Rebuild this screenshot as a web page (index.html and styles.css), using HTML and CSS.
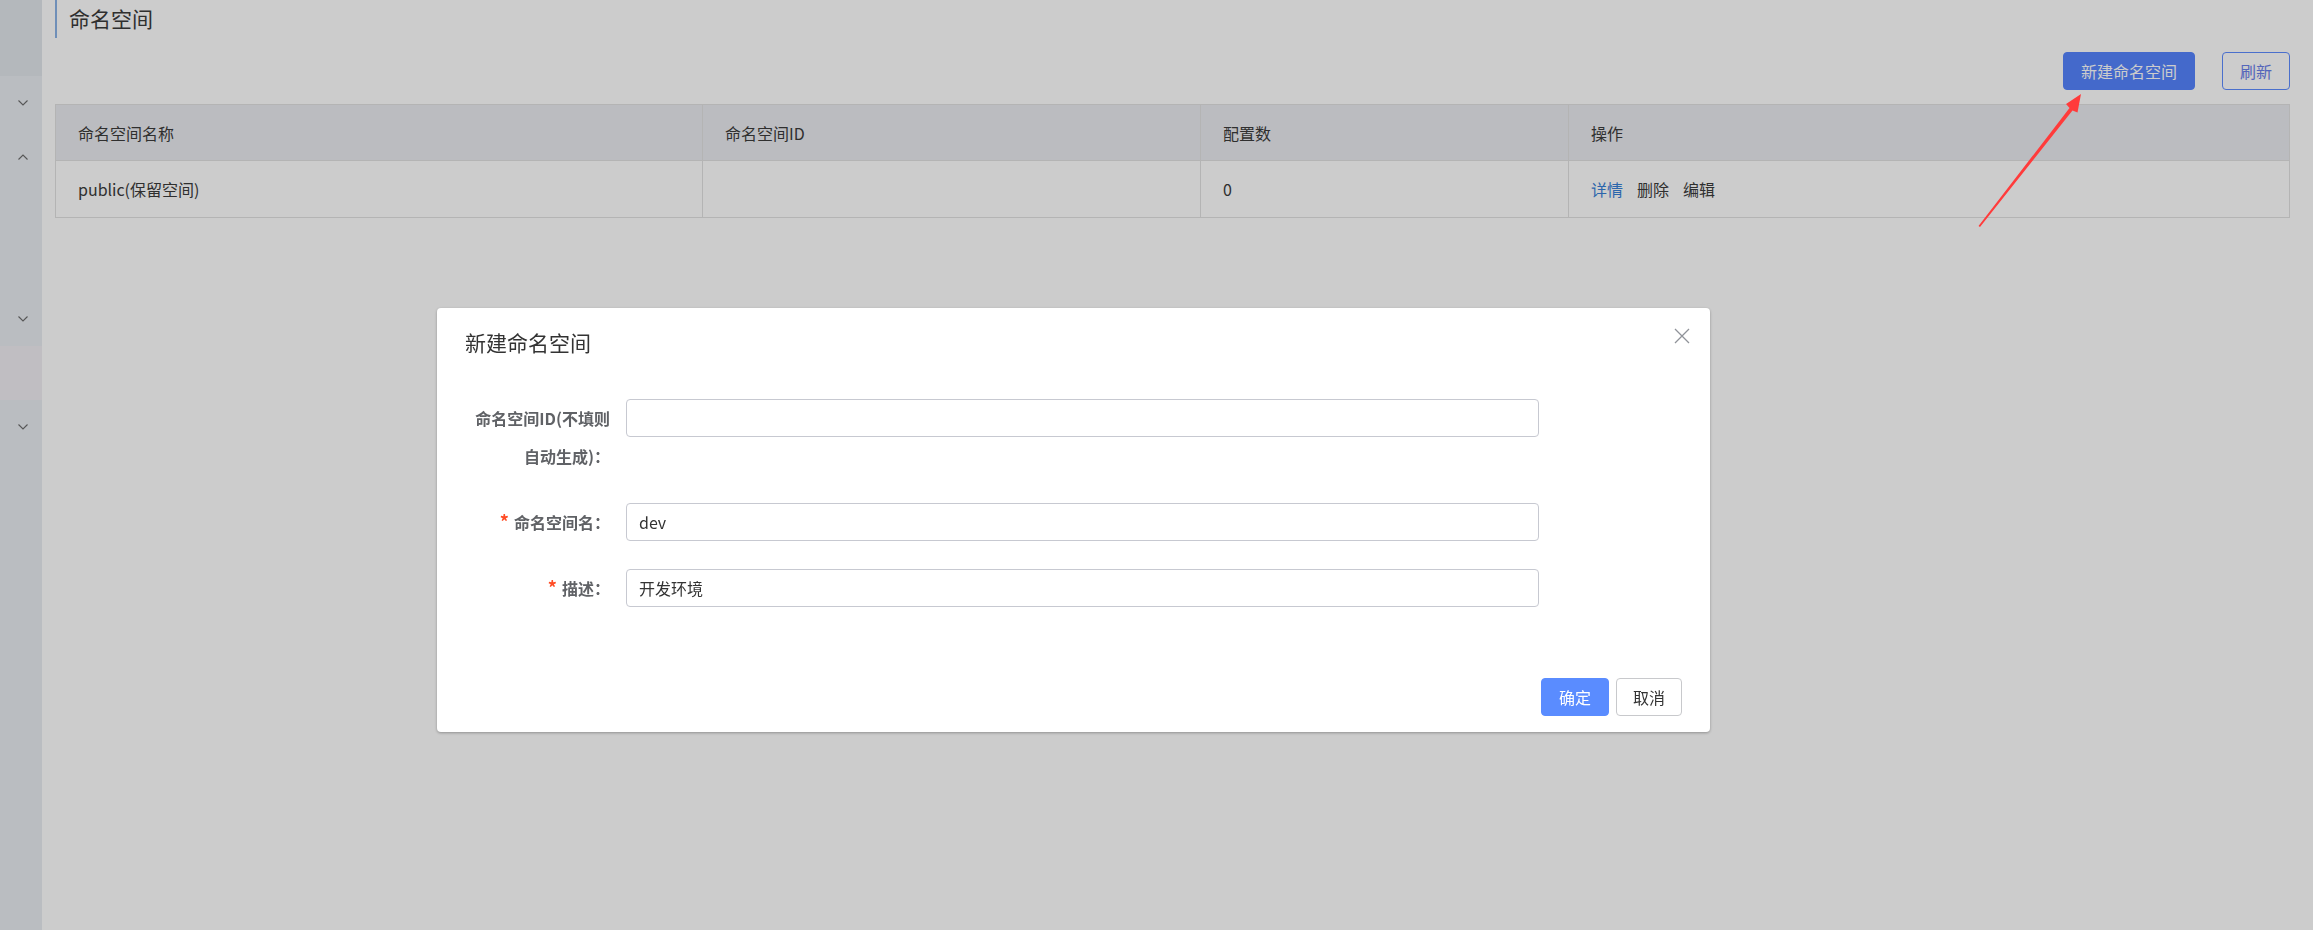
FILE: index.html
```html
<!DOCTYPE html>
<html lang="zh-CN">
<head>
<meta charset="utf-8">
<title>命名空间</title>
<link rel="stylesheet" href="styles.css">
</head>
<body>
<div class="app">
  <aside class="sidebar">
    <div class="side-top"></div>
    <div class="side-item"><svg class="chev" viewBox="0 0 10 6"><polyline points="0.5,0.5 5,5 9.5,0.5"/></svg></div>
    <div class="side-item"><svg class="chev" viewBox="0 0 10 6"><polyline points="0.5,5.5 5,1 9.5,5.5"/></svg></div>
    <div class="side-item"></div>
    <div class="side-item"></div>
    <div class="side-item"><svg class="chev" viewBox="0 0 10 6"><polyline points="0.5,0.5 5,5 9.5,0.5"/></svg></div>
    <div class="side-item active"></div>
    <div class="side-item"><svg class="chev" viewBox="0 0 10 6"><polyline points="0.5,0.5 5,5 9.5,0.5"/></svg></div>
  </aside>
  <main class="main">
    <h1 class="page-title">命名空间</h1>
    <div class="toolbar">
      <button class="btn btn-new">新建命名空间</button>
      <button class="btn btn-refresh">刷新</button>
    </div>
    <table class="ns-table">
      <colgroup>
        <col class="c1"><col class="c2"><col class="c3"><col class="c4">
      </colgroup>
      <thead>
        <tr><th>命名空间名称</th><th>命名空间ID</th><th>配置数</th><th>操作</th></tr>
      </thead>
      <tbody>
        <tr>
          <td>public(保留空间)</td>
          <td></td>
          <td>0</td>
          <td class="ops"><a class="link">详情</a><span>删除</span><span>编辑</span></td>
        </tr>
      </tbody>
    </table>
  </main>
</div>

<div class="mask">
  <div class="dialog">
    <div class="dialog-header">
      <h2 class="dialog-title">新建命名空间</h2>
      <svg class="dialog-close" viewBox="0 0 16 16"><path d="M1 1L15 15M15 1L1 15"/></svg>
    </div>
    <div class="dialog-body">
      <form class="form">
        <div class="form-item">
          <label class="form-label">命名空间ID(不填则自动生成)：</label>
          <input class="form-input" type="text" value="">
        </div>
        <div class="form-item">
          <label class="form-label"><span class="req">*</span>命名空间名：</label>
          <input class="form-input" type="text" value="dev">
        </div>
        <div class="form-item">
          <label class="form-label"><span class="req">*</span>描述：</label>
          <input class="form-input" type="text" value="开发环境">
        </div>
      </form>
    </div>
    <div class="dialog-footer">
      <button class="btn btn-ok">确定</button>
      <button class="btn btn-cancel">取消</button>
    </div>
  </div>
</div>

<svg class="annot" viewBox="0 0 2313 930">
  <polygon points="2081,94 2077.5,112.5 2072.5,110.5 1980,227 1978.5,226 2069.5,108 2066,104"/>
</svg>
</body>
</html>
```

FILE: styles.css
```css
* { box-sizing: border-box; }
html, body { margin: 0; height: 100%; }
body {
  font-family: "Noto Sans CJK SC", "Noto Sans", sans-serif;
  font-size: 16px;
  color: #3b3b3b;
  background: #fff;
  overflow: hidden;
}

.app { display: flex; height: 930px; }

.sidebar { width: 42px; flex: none; background: #e9edf2; }
.side-top { height: 76px; background: #e2e6eb; }
.side-item { height: 54px; display: flex; align-items: center; padding-left: 18px; }
.side-item.active { background: #f0eef3; }
.chev { width: 10px; height: 6px; display: block; fill: none; stroke: #6c6c6c; stroke-width: 1.1; }

.main { flex: 1; padding: 0 24px 0 13px; }

.page-title {
  margin: 0;
  height: 38px;
  line-height: 36px;
  border-left: 2px solid #8bb3e6;
  padding-left: 12px;
  font-size: 21px;
  font-weight: 400;
  color: #3b3b3b;
}

.toolbar { display: flex; justify-content: flex-end; gap: 27px; margin-top: 14px; }

.btn {
  height: 38px;
  font-family: inherit;
  font-size: 16px;
  line-height: 36px;
  border-radius: 4px;
  padding: 0 17px;
  border: 1px solid transparent;
  background: transparent;
  cursor: pointer;
}
.btn-new { background: #5584fe; border-color: #5584fe; color: #fff; }
.btn-refresh { border-color: #5d8bff; color: #6a80ea; }

.ns-table {
  width: 100%;
  margin-top: 14px;
  border-collapse: collapse;
  table-layout: fixed;
  border: 1px solid #e1e1e1;
}
.c1 { width: 647px; }
.c2 { width: 498px; }
.c3 { width: 368px; }
.c4 { width: 721px; }
.ns-table th, .ns-table td {
  border: 1px solid #e1e1e1;
  text-align: left;
  padding: 0 22px;
  font-weight: 400;
  font-size: 16px;
  color: #3b3b3b;
}
.ns-table th { height: 56px; background: #eaebf0; }
.ns-table td { height: 57px; }
.ops .link, .ops span { margin-right: 14px; }
.link { color: #3680d8; }

.mask { position: fixed; inset: 0; background: rgba(0, 0, 0, 0.2); }

.dialog {
  position: absolute;
  left: 437px;
  top: 308px;
  width: 1273px;
  background: #fff;
  border-radius: 4px;
  box-shadow: 0 1px 3px rgba(0, 0, 0, 0.3);
}
.dialog-header { position: relative; padding: 20px 28px 0; }
.dialog-title { margin: 0; font-size: 21px; line-height: 28px; font-weight: 400; color: #333; }
.dialog-close {
  position: absolute;
  right: 20px;
  top: 20px;
  width: 16px;
  height: 16px;
  fill: none;
  stroke: #909399;
  stroke-width: 1.3;
}

.dialog-body { padding: 43px 28px 0; }
.form { width: 1074px; }
.form-item { display: flex; margin-bottom: 28px; }
.form-label {
  flex: none;
  width: 161px;
  height: auto;
  padding-right: 16px;
  text-align: right;
  line-height: 38px;
  font-size: 16px;
  font-weight: 700;
  color: #606266;
}
.req { color: #ff4d26; margin-right: 5px; font-weight: 700; font-size: 18px; line-height: 1; }
.form-input {
  flex: 1;
  height: 38px;
  border: 1px solid #c7c9d1;
  border-radius: 4px;
  padding: 0 12px;
  font-family: inherit;
  font-size: 16px;
  color: #333;
  outline: none;
}

.dialog-footer { display: flex; justify-content: flex-end; gap: 7px; padding: 43px 28px 16px; }
.btn-ok { background: #5a8cff; border-color: #5a8cff; color: #fff; }
.btn-cancel { background: #fff; border-color: #c8c9cc; color: #333; padding: 0 16px; }

.annot {
  position: fixed;
  left: 0;
  top: 0;
  width: 2313px;
  height: 930px;
  pointer-events: none;
  fill: #ff3b3b;
}
```
